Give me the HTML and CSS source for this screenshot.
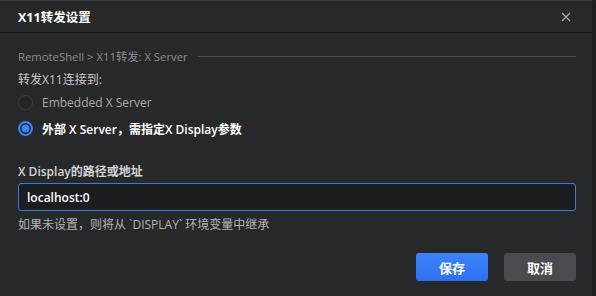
FILE: index.html
```html
<!DOCTYPE html>
<html>

<head>
    <meta charset="UTF-8">
    <title>X11转发设置</title>

    <link rel="stylesheet" href="styles.css">

</head>

<body>

    <div class="dialog">
        <div class="dialog-header">
            <span class="dialog-title">X11转发设置</span>
            <span class="close-btn">
                <svg width="10" height="10" viewBox="0 0 10 10">
                    <path d="M1 1 L9 9 M9 1 L1 9" stroke="#a8a9ab" stroke-width="1.2" fill="none" />
                </svg>
            </span>
        </div>

        <div class="dialog-body">
            <div class="crumb">
                <span>RemoteShell &gt; X11转发:&nbsp;X Server</span>
                <span class="crumb-line"></span>
            </div>

            <div class="group-label">转发X11连接到:</div>

            <div class="radio-row">
                <span class="radio"></span>
                <span class="radio-text">Embedded X Server</span>
            </div>
            <div class="radio-row checked">
                <span class="radio"></span>
                <span class="radio-text">外部 X Server，需指定X Display参数</span>
            </div>

            <div class="field-label">X Display的路径或地址</div>
            <input class="text-input" type="text" value="localhost:0">
            <div class="hint">如果未设置，则将从 `DISPLAY` 环境变量中继承</div>

            <div class="actions">
                <button class="btn btn-primary">保存</button>
                <button class="btn btn-secondary">取消</button>
            </div>
        </div>
    </div>

</body>

</html>
```

FILE: styles.css
```css
body {
    margin: 0;
    background-color: #1e1f21;
    font-family: "Open Sans", "Noto Sans CJK SC", sans-serif;
    font-size: 12px;
}

.dialog {
    width: 592px;
    height: 295px;
    background-color: #27282a;
    border-top: 1px solid #3a3b3d;
    border-right: 1px solid #1b1c1e;
    display: flex;
    flex-direction: column;
}

.dialog-header {
    height: 31px;
    border-bottom: 1px solid #141516;
    display: flex;
    align-items: center;
    justify-content: space-between;
    padding: 0 21px 0 18px;
}

.dialog-title {
    color: #ffffff;
    font-weight: bold;
    font-size: 12.5px;
}

.close-btn {
    display: flex;
}

.dialog-body {
    padding: 14px 16px 0 18px;
    display: flex;
    flex-direction: column;
}

.crumb {
    display: flex;
    align-items: center;
    gap: 10px;
    color: #8c8d90;
    height: 18px;
    font-size: 11.3px;
}

.crumb-line {
    flex: 1;
    height: 1px;
    background-color: #4a4b4e;
}

.group-label {
    color: #c9cacc;
    margin-top: 6px;
    height: 18px;
    line-height: 18px;
}

.radio-row {
    display: flex;
    align-items: center;
    gap: 9px;
    height: 25px;
    margin-top: 1px;
}

.radio {
    width: 15px;
    height: 15px;
    border: 1px solid #3c3d40;
    border-radius: 50%;
    box-sizing: border-box;
    background-color: #242527;
}

.radio-text {
    color: #a9aaad;
}

.radio-row.checked .radio {
    border: 2px solid #3c83f5;
    background-color: #3c83f5;
    box-shadow: inset 0 0 0 1.5px #1e1f21;
}

.radio-row.checked .radio-text {
    color: #ffffff;
    font-weight: 600;
}

.field-label {
    color: #d4d5d7;
    font-weight: 600;
    margin-top: 22px;
    height: 18px;
    line-height: 18px;
}

.text-input {
    margin-top: 2px;
    height: 28px;
    box-sizing: border-box;
    background-color: #1c1d1f;
    border: 1px solid #3b7be6;
    border-radius: 3px;
    color: #ffffff;
    font-family: "Open Sans", "Noto Sans CJK SC", sans-serif;
    font-size: 12px;
    font-weight: 600;
    padding: 0 8px;
    outline: none;
}

.hint {
    color: #b4b5b8;
    margin-top: 5px;
    height: 18px;
    line-height: 18px;
}

.actions {
    display: flex;
    justify-content: flex-end;
    gap: 16px;
    margin-top: 19px;
}

.btn {
    width: 72px;
    height: 28px;
    border: none;
    border-radius: 3px;
    color: #ffffff;
    font-family: "Open Sans", "Noto Sans CJK SC", sans-serif;
    font-size: 13px;
    font-weight: 600;
    cursor: pointer;
}

.btn-primary {
    background: linear-gradient(#3c85fb, #2f6ff0);
}

.btn-secondary {
    background-color: #4a4b4f;
}
```
